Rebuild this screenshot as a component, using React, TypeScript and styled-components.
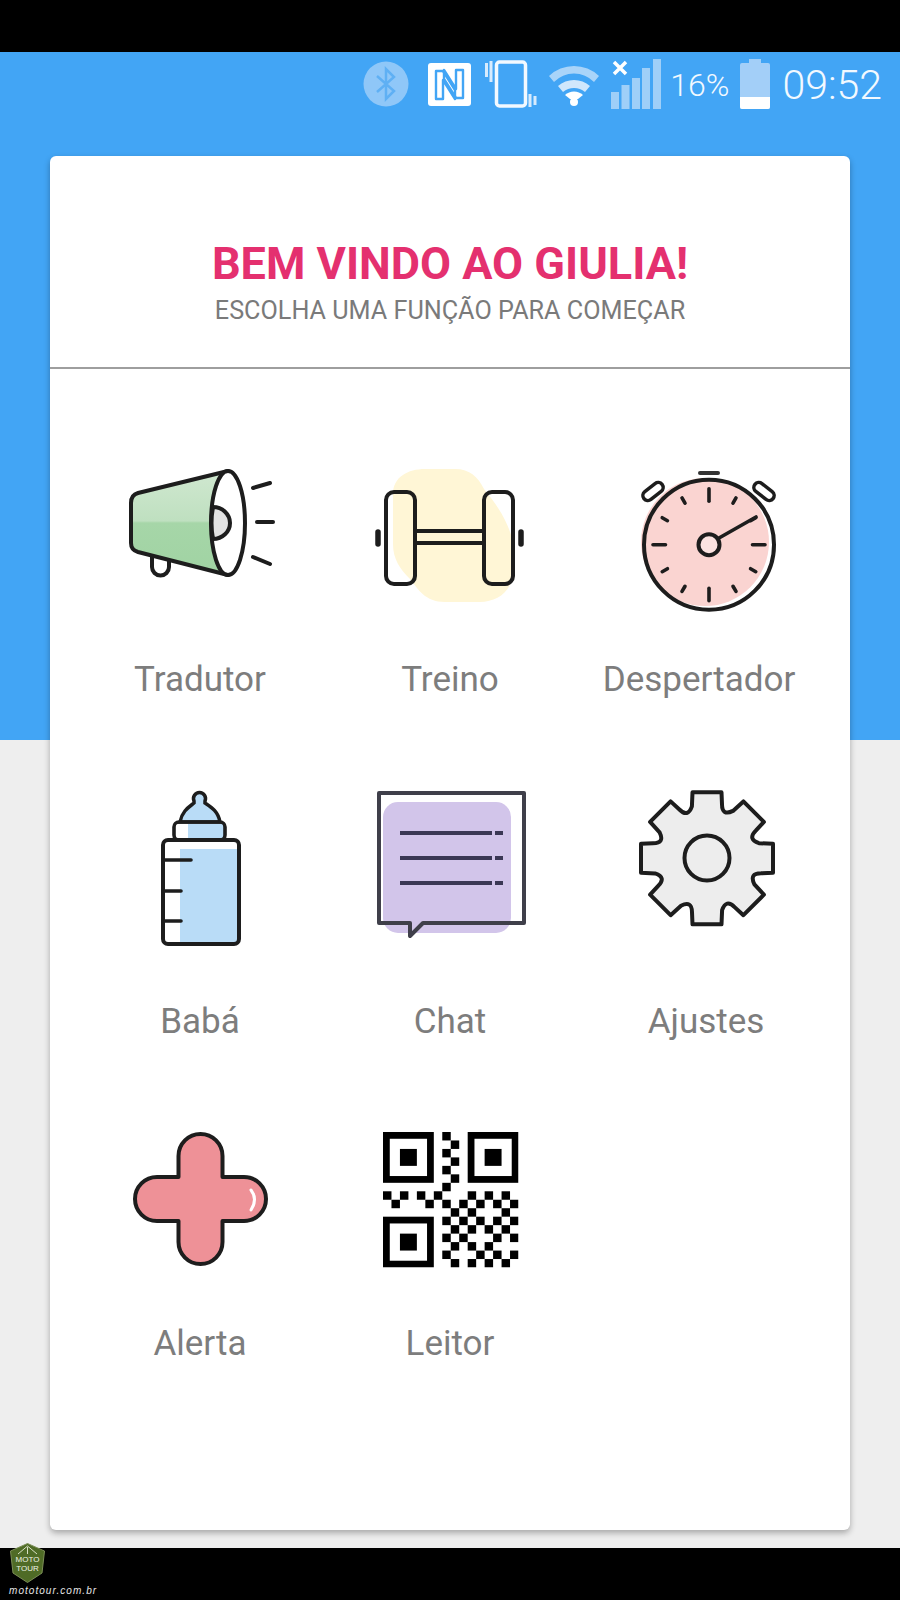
import React from "react";
import styled, { createGlobalStyle } from "styled-components";

const Global = createGlobalStyle`
  html, body { margin: 0; padding: 0; background: #000; }
  body { font-family: Roboto, "Liberation Sans", sans-serif; }
`;

const Page = styled.div`
  width: 900px;
  height: 1600px;
  position: relative;
  display: flex;
  flex-direction: column;
  overflow: hidden;
  background: #000;
`;
const BlackBar = styled.div<{ $h: number }>`
  height: ${(p) => p.$h}px;
  flex: none;
  background: #000;
`;
const Stage = styled.div`
  flex: 1;
  display: flex;
  flex-direction: column;
  background: linear-gradient(to bottom, #42a5f5 0, #42a5f5 688px, #eeeeee 688px, #eeeeee 100%);
`;
const StatusBar = styled.div`
  height: 64px;
  flex: none;
  display: flex;
  align-items: center;
  justify-content: flex-end;
  padding-right: 18px;
`;
const StatusIcon = styled.svg<{ $ml: number }>`
  display: block;
  flex: none;
  margin-left: ${(p) => p.$ml}px;
`;
const StatusText = styled.span<{ $ml: number; $size: number }>`
  margin-left: ${(p) => p.$ml}px;
  padding-top: 2px;
  font-size: ${(p) => p.$size}px;
  font-weight: 300;
  color: #f2f9ff;
  line-height: 1;
  white-space: nowrap;
`;
const Card = styled.main`
  margin: 40px 50px 0;
  height: 1374px;
  background: #fff;
  border-radius: 6px;
  box-shadow: 0 3px 6px rgba(0, 0, 0, 0.3);
  display: flex;
  flex-direction: column;
`;
const Header = styled.header`
  height: 213px;
  flex: none;
  box-sizing: border-box;
  border-bottom: 2px solid #9e9e9e;
  display: flex;
  flex-direction: column;
  align-items: center;
  padding-top: 83px;
`;
const Title = styled.h1`
  margin: 0;
  font-size: 45px;
  line-height: 50px;
  font-weight: 700;
  color: #e4306f;
  white-space: nowrap;
`;
const Subtitle = styled.p`
  margin: 8px 0 0;
  font-size: 25.2px;
  line-height: 28px;
  font-weight: 400;
  color: #7a7a7a;
  white-space: nowrap;
`;
const Menu = styled.div`
  padding: 80px 25px 0;
`;
const Row = styled.div<{ $top: number }>`
  display: grid;
  grid-template-columns: repeat(3, 250px);
  margin-top: ${(p) => p.$top}px;
`;
const Cell = styled.div<{ $gap: number }>`
  display: flex;
  flex-direction: column;
  align-items: center;
  gap: ${(p) => p.$gap}px;
`;
const IconSvg = styled.svg`
  display: block;
  width: 250px;
  height: 180px;
  overflow: visible;
`;
const Label = styled.span<{ $shift?: number }>`
  font-size: 35px;
  line-height: 40px;
  color: #7d7d7d;
  padding-left: ${(p) => Math.max(p.$shift ?? 0, 0)}px;
  padding-right: ${(p) => Math.max(-(p.$shift ?? 0), 0)}px;
`;
const Badge = styled.div`
  position: absolute;
  left: 9px;
  top: 1543px;
  width: 37px;
  height: 40px;
`;
const BadgeText = styled.div`
  position: absolute;
  left: 0;
  right: 0;
  top: 12px;
  text-align: center;
  font-family: "Liberation Sans", sans-serif;
  font-size: 8px;
  line-height: 9px;
  color: #eef2e4;
`;
const Credit = styled.div`
  position: absolute;
  left: 9px;
  top: 1585px;
  font-family: "Liberation Sans", sans-serif;
  font-size: 10px;
  line-height: 12px;
  font-style: italic;
  letter-spacing: 1.05px;
  color: #e6e6e6;
`;

const INK = "#1d1d1d";
const SW = 4;

const Megaphone = () => (
  <IconSvg viewBox="75 450 250 180">
    <defs>
      <linearGradient id="horn" x1="0" y1="0" x2="0" y2="1">
        <stop offset="0" stopColor="#d0e8d0" />
        <stop offset="0.48" stopColor="#bfe0c0" />
        <stop offset="0.5" stopColor="#a6d6a8" />
        <stop offset="1" stopColor="#a0d3a3" />
      </linearGradient>
    </defs>
    <path d="M152 558 V568 A8.5 8.5 0 0 0 169 568 V562" fill="#fff" stroke={INK} strokeWidth={SW} />
    <path d="M228 472 L138 494 Q131 496 131 504 V544 Q131 551 138 553 L228 576 Z" fill="url(#horn)" stroke={INK} strokeWidth={SW} strokeLinejoin="round" />
    <ellipse cx="228" cy="524" rx="17" ry="52" fill="#fff" stroke={INK} strokeWidth={SW} />
    <path d="M213 508 A17 16 0 0 1 213 540 Q210 524 213 508 Z" fill="#e2e2e2" stroke={INK} strokeWidth={SW} />
    <g stroke={INK} strokeWidth={SW} strokeLinecap="round">
      <path d="M253 489 L270 484" />
      <path d="M257 523 L273 523" />
      <path d="M253 558 L270 565" />
    </g>
  </IconSvg>
);

const Dumbbell = () => (
  <IconSvg viewBox="325 450 250 180">
    <path d="M393 495 C393 478 408 470 425 470 H455 C470 470 478 478 484 490 C500 510 514 530 515 560 C516 590 500 603 480 603 H445 C425 603 418 590 410 580 C400 570 393 560 393 545 Z" fill="#fff6d6" />
    <g fill="none" stroke={INK} strokeWidth={SW}>
      <rect x="386" y="493" width="29" height="92" rx="8" />
      <rect x="484" y="493" width="29" height="92" rx="8" />
      <path d="M415 532 H484 M415 544 H484" />
    </g>
    <g stroke={INK} strokeWidth="5.5" strokeLinecap="round">
      <path d="M378 533 V545" />
      <path d="M521 533 V545" />
    </g>
  </IconSvg>
);

const ticks = Array.from({ length: 12 }, (_, i) => {
  const a = (i * Math.PI) / 6;
  const major = i % 3 === 0;
  const r1 = major ? 43.5 : 48;
  const r2 = major ? 56 : 54;
  return {
    x1: 709 + r1 * Math.sin(a),
    y1: 545.7 - r1 * Math.cos(a),
    x2: 709 + r2 * Math.sin(a),
    y2: 545.7 - r2 * Math.cos(a),
  };
});

const Stopwatch = () => (
  <IconSvg viewBox="575 450 250 180">
    <circle cx="705" cy="543" r="64" fill="#fad4d1" />
    <circle cx="709" cy="545.7" r="65" fill="none" stroke={INK} strokeWidth={SW} />
    <path d="M700 474 H718" stroke="#333" strokeWidth="4" strokeLinecap="round" />
    <rect x="648" y="481" width="10" height="23" rx="5" transform="rotate(52 653 492.5)" fill="#fff" stroke={INK} strokeWidth="3.5" />
    <rect x="759" y="481" width="10" height="23" rx="5" transform="rotate(-52 764 492.5)" fill="#fff" stroke={INK} strokeWidth="3.5" />
    <g stroke={INK} strokeWidth="3.6" strokeLinecap="round">
      {ticks.map((t, i) => (
        <line key={i} {...t} />
      ))}
      <line x1="719" y1="539" x2="756" y2="518" />
    </g>
    <circle cx="709" cy="545.7" r="10.5" fill="#fbe3e1" stroke={INK} strokeWidth={SW} />
  </IconSvg>
);

const Bottle = () => (
  <IconSvg viewBox="75 790 250 180">
    <rect x="163" y="841" width="76" height="104" rx="5" fill="#fff" />
    <rect x="180" y="850" width="57" height="93" fill="#b9dcf7" />
    <rect x="188" y="825" width="36" height="16" fill="#b9dcf7" />
    <path d="M180 823 C182 812 189 808 194 804 V802 A6 6 0 1 1 205 802 V804 C211 808 218 812 220 823 Z" fill="#b9dcf7" stroke={INK} strokeWidth="3.5" />
    <rect x="174" y="823" width="51" height="18" rx="5" fill="none" stroke={INK} strokeWidth="3.6" />
    <rect x="163" y="841" width="76" height="104" rx="5" fill="none" stroke={INK} strokeWidth={SW} />
    <path d="M165 861 H191 M165 892 H181 M165 922 H181" stroke={INK} strokeWidth="3.6" strokeLinecap="round" />
  </IconSvg>
);

const Chat = () => (
  <IconSvg viewBox="325 790 250 180">
    <rect x="383" y="803" width="128" height="131" rx="15" fill="#d2c5ea" />
    <path d="M379 794 H524 V924 H423 L410 937 V924 H379 Z" fill="none" stroke="#3f3f4a" strokeWidth={SW} strokeLinejoin="round" />
    <path d="M400 834 H492 M495 834 H503 M400 859 H492 M495 859 H503 M400 884 H492 M495 884 H503" stroke="#3b3855" strokeWidth="3.8" />
  </IconSvg>
);

const gearPath = (() => {
  const cx = 707;
  const cy = 859.3;
  const rot = (x: number, y: number, k: number) => {
    const a = (k * Math.PI) / 4;
    return `${(cx + x * Math.cos(a) - y * Math.sin(a)).toFixed(1)} ${(cy + x * Math.sin(a) + y * Math.cos(a)).toFixed(1)}`;
  };
  let d = "";
  for (let k = 0; k < 8; k++) {
    d += `${k === 0 ? "M" : "L"}${rot(-14.5, -66, k)} L${rot(14.5, -66, k)} L${rot(15, -54, k)} Q${rot(15, -42, k)} ${rot(26, -47.4, k)} `;
  }
  return d + "Z";
})();

const Gear = () => (
  <IconSvg viewBox="575 790 250 180">
    <path d={gearPath} fill="#ededed" stroke={INK} strokeWidth={SW} strokeLinejoin="round" />
    <circle cx="707" cy="859" r="22.5" fill="#ededed" stroke={INK} strokeWidth={SW} />
  </IconSvg>
);

const Cross = () => (
  <IconSvg viewBox="75 1120 250 180">
    <path
      d="M178.5 1157 A22 22 0 0 1 222.5 1157 V1178 H244 A22 22 0 0 1 244 1222 H222.5 V1243 A22 22 0 0 1 178.5 1243 V1222 H157 A22 22 0 0 1 157 1178 H178.5 Z"
      fill="#ee9197"
      stroke={INK}
      strokeWidth={SW}
      strokeLinejoin="round"
    />
    <path d="M251 1191 Q258 1200 251 1211" fill="none" stroke="#fff" strokeWidth="3" strokeLinecap="round" />
  </IconSvg>
);

const QR_DOTS: number[][] = [
  [7, 0], [8, 1], [7, 2], [8, 3], [7, 4], [8, 5], [7, 6],
  [0, 7], [2, 7], [4, 7], [6, 7], [10, 7], [12, 7], [14, 7],
  [1, 8], [5, 8], [7, 8], [9, 8], [11, 8], [13, 8], [15, 8],
  [8, 9], [10, 9], [14, 9],
  [7, 10], [9, 10], [11, 10], [13, 10], [15, 10],
  [8, 11], [10, 11], [12, 11], [14, 11],
  [7, 12], [9, 12], [13, 12], [15, 12],
  [8, 13], [10, 13], [12, 13],
  [7, 14], [11, 14], [13, 14], [15, 14],
  [8, 15], [10, 15], [12, 15], [14, 15],
];

const Finder = ({ c, r }: { c: number; r: number }) => (
  <g transform={`translate(${c} ${r})`}>
    <rect x="0.4" y="0.4" width="5.2" height="5.2" fill="none" stroke="#000" strokeWidth="0.8" />
    <rect x="2" y="2" width="2" height="2" fill="#000" />
  </g>
);

const Qr = () => (
  <IconSvg viewBox="325 1120 250 180">
    <svg x="383" y="1133" width="135.5" height="135.5" viewBox="0 0 16 16">
      <Finder c={0} r={0} />
      <Finder c={10} r={0} />
      <Finder c={0} r={10} />
      {QR_DOTS.map(([c, r]) => (
        <rect key={`${c}-${r}`} x={c} y={r} width="1" height="1" fill="#000" />
      ))}
    </svg>
  </IconSvg>
);

const items = [
  { top: 0, gap: 31, cells: [
    { label: "Tradutor", icon: <Megaphone /> },
    { label: "Treino", icon: <Dumbbell /> },
    { label: "Despertador", icon: <Stopwatch />, shift: -2 },
  ] },
  { top: 89, gap: 33, cells: [
    { label: "Babá", icon: <Bottle /> },
    { label: "Chat", icon: <Chat /> },
    { label: "Ajustes", icon: <Gear />, shift: 12 },
  ] },
  { top: 77, gap: 25, cells: [
    { label: "Alerta", icon: <Cross /> },
    { label: "Leitor", icon: <Qr /> },
  ] },
];

export default function App() {
  return (
    <Page>
      <Global />
      <BlackBar $h={52} />
      <Stage>
        <StatusBar>
          <StatusIcon $ml={0} width="46" height="46" viewBox="0 0 46 46">
            <circle cx="23" cy="23" r="22.5" fill="#8fc7f8" />
            <path d="M14 15 L31 30 L23 38 V8 L31 16 L14 31" fill="none" stroke="#5fb0f4" strokeWidth="2.5" />
          </StatusIcon>
          <StatusIcon $ml={19} width="43" height="43" viewBox="0 0 43 43">
            <rect width="43" height="43" rx="3" fill="#fff" />
            <path d="M8 36 V8 H15 L27 27 V36 L15 17 V36 Z" fill="none" stroke="#42a5f5" strokeWidth="2.4" strokeLinejoin="round" />
            <path d="M35 7 V35 H28 L16 16 V7 L28 26 V7 Z" fill="none" stroke="#42a5f5" strokeWidth="2.4" strokeLinejoin="round" />
          </StatusIcon>
          <StatusIcon $ml={14} width="52" height="48" viewBox="0 0 52 48">
            <rect x="11.5" y="2" width="29" height="44" rx="3" fill="none" stroke="#f2f9ff" strokeWidth="3.5" />
            <path d="M1.5 3 V17 M6 1 V22" stroke="#d7ebfd" strokeWidth="3" />
            <path d="M45 34 V47 M50 36 V45" stroke="#d7ebfd" strokeWidth="3" />
          </StatusIcon>
          <StatusIcon $ml={11} width="52" height="44" viewBox="0 0 52 44">
            <path d="M1 14 A36 36 0 0 1 51 14 L46 20 A28 28 0 0 0 6 20 Z" fill="#a9d4f9" />
            <path d="M10 24 A24 24 0 0 1 42 24 L37 30 A17 17 0 0 0 15 30 Z" fill="#d0e7fc" />
            <path d="M17 33 A13 13 0 0 1 35 33 L30 37 H22 Z" fill="#fff" />
            <circle cx="26" cy="40" r="4" fill="#fff" />
          </StatusIcon>
          <StatusIcon $ml={11} width="50" height="50" viewBox="0 0 50 50">
            <path d="M3 3 L15 15 M15 3 L3 15" stroke="#fff" strokeWidth="3.5" />
            <g fill="#9fcff8">
              <rect x="0" y="33" width="8" height="17" />
              <rect x="10.5" y="26" width="8" height="24" />
              <rect x="21" y="19" width="8" height="31" />
              <rect x="31" y="9" width="8" height="41" />
              <rect x="42" y="0" width="8" height="50" />
            </g>
          </StatusIcon>
          <StatusText $ml={9} $size={32}>16%</StatusText>
          <StatusIcon $ml={11} width="30" height="50" viewBox="0 0 30 50">
            <path d="M9 0 H21 V4 H28 Q30 4 30 6 V48 Q30 50 28 50 H2 Q0 50 0 48 V6 Q0 4 2 4 H9 Z" fill="#a3cff8" />
            <path d="M0 38 H30 V48 Q30 50 28 50 H2 Q0 50 0 48 Z" fill="#fff" />
          </StatusIcon>
          <StatusText $ml={12} $size={41}>09:52</StatusText>
        </StatusBar>
        <Card>
          <Header>
            <Title>BEM VINDO AO GIULIA!</Title>
            <Subtitle>ESCOLHA UMA FUNÇÃO PARA COMEÇAR</Subtitle>
          </Header>
          <Menu>
            {items.map((row) => (
              <Row key={row.cells[0].label} $top={row.top}>
                {row.cells.map((c) => (
                  <Cell key={c.label} $gap={row.gap}>
                    {c.icon}
                    <Label $shift={c.shift}>{c.label}</Label>
                  </Cell>
                ))}
              </Row>
            ))}
          </Menu>
        </Card>
      </Stage>
      <BlackBar $h={52} />
      <Badge>
        <svg width="37" height="40" viewBox="0 0 37 40">
          <path d="M18.5 0.5 L35.5 8 L33 30 L18.5 39.5 L4 30 L1.5 8 Z" fill="#4f6b26" stroke="#7d8f58" strokeWidth="1" />
          <path d="M9 11 L18.5 3 L28 11 M18.5 4 V11" fill="none" stroke="#d8e0c4" strokeWidth="1" />
        </svg>
        <BadgeText>MOTO<br />TOUR</BadgeText>
      </Badge>
      <Credit>mototour.com.br</Credit>
    </Page>
  );
}
